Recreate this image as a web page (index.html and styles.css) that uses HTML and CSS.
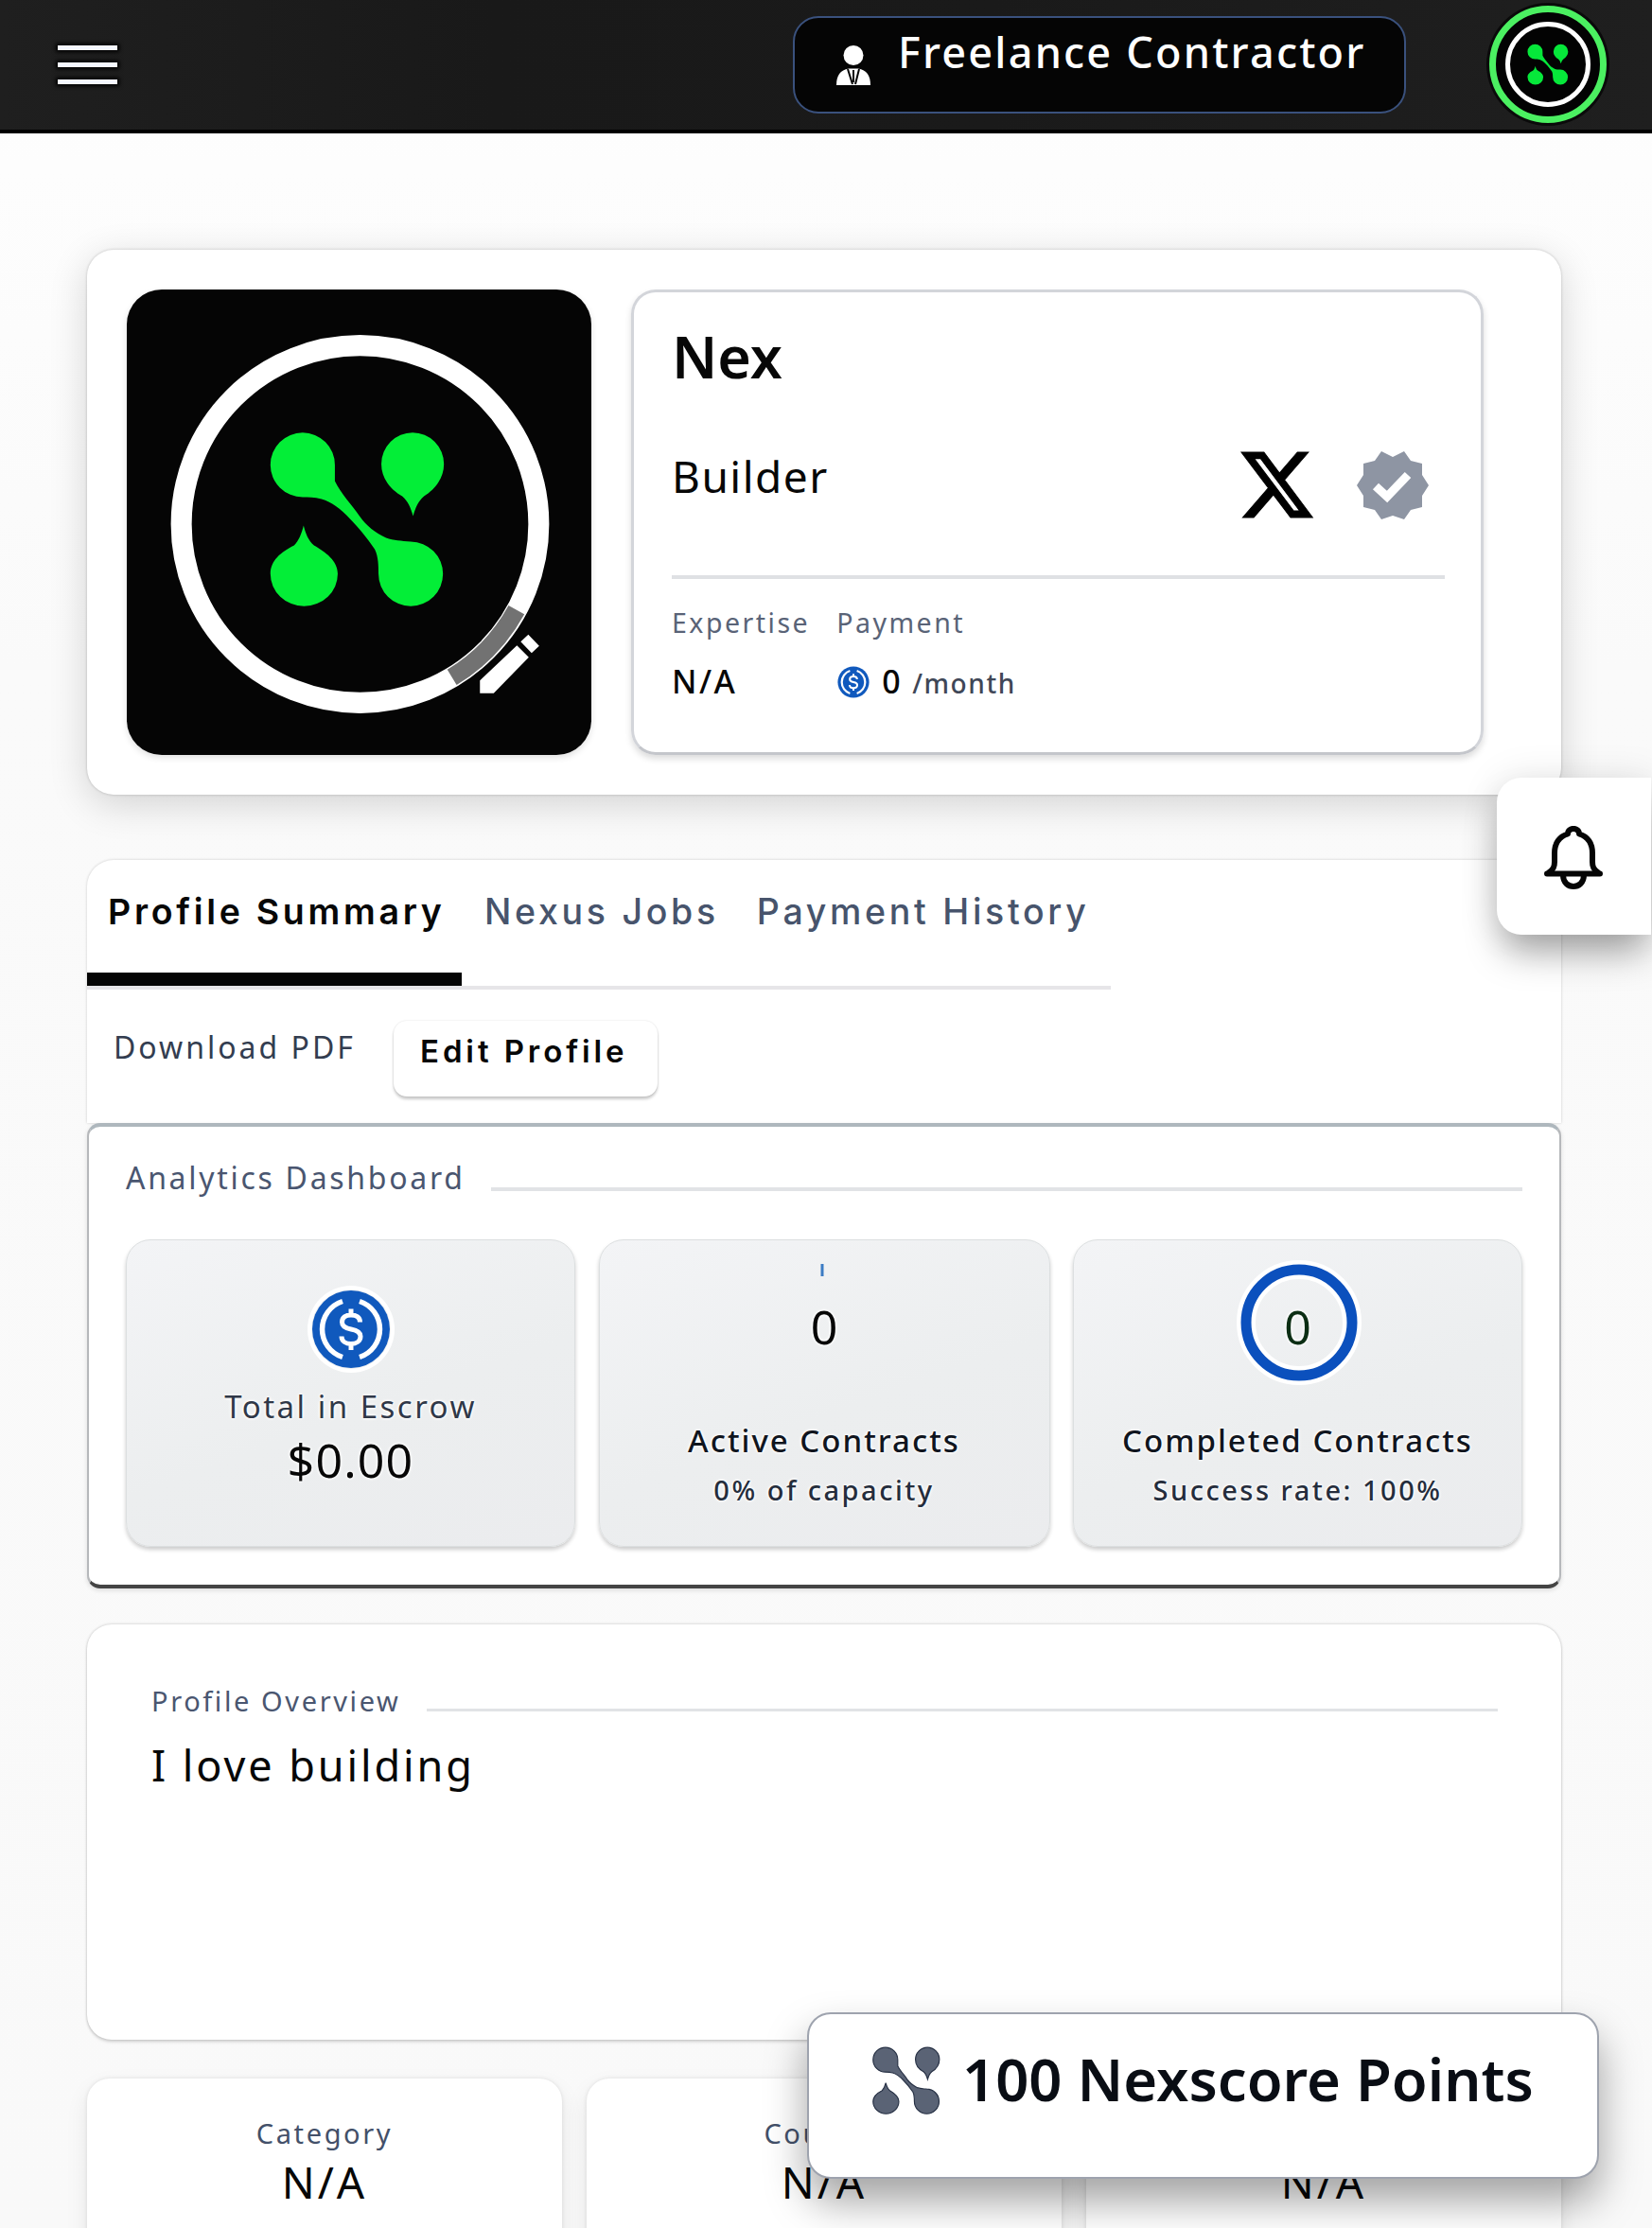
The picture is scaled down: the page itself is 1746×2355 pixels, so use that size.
FILE: index.html
```html
<!DOCTYPE html>
<html lang="en">
<head>
<meta charset="utf-8">
<title>Nex – Profile</title>
<link rel="stylesheet" href="styles.css">
</head>
<body>
<svg width="0" height="0" class="defs" aria-hidden="true">
  <symbol id="nexus" viewBox="-94 -94 188 188">
    <path d="M-92-57a34 34 0 0 1 68 0V-40C-18-27-6-15 2-3 10 8 18 14 30 20 38 23 46 23 56 24A34 34 0 1 1 22 58C22 50 22 40 18 32 10 20 0 8-8 0-18-11-28-18-38-21-46-23-52-23-58-23A34 34 0 0 1-92-57z"/>
    <path d="M58.500-3C56-12 53-19 47-24 36-30 25-42 25-58a33 33 0 0 1 66 0c0 16-11 28-21 34-6 5-9 12-11.500 21z"/>
    <path d="M-57 7C-59 15-62 23-67 28-81 35-92 44-92 58a35.500 34 0 0 0 71 0C-21 44-34 35-46 28-52 23-55 15-57 7z"/>
  </symbol>
  <symbol id="coin" viewBox="0 0 84 84">
    <circle cx="42" cy="42" r="41" fill="#1059bd"/>
    <path d="M33 12.500a31 31 0 0 0 0 59M51 12.500a31 31 0 0 1 0 59" fill="none" stroke="#fff" stroke-width="5.500"/>
    <path d="M51.500 34.500c0-5-4-7.500-9.500-7.500s-9.500 2.500-9.500 7.500 4 6.500 9.500 7.500 10 2.500 10 7.500-4.500 8-10 8-10-3-10-8M42 20.500V27M42 57v7" fill="none" stroke="#fff" stroke-width="5"/>
  </symbol>
</svg>

<header class="topbar">
  <button class="menu" aria-label="Menu"><span></span><span></span><span></span></button>
  <div class="role">
    <svg class="role-icon" viewBox="0 0 38 42"><ellipse cx="19" cy="10.500" rx="10.500" ry="10.500"/><path d="M1 42C1 32 5 26 14 24.500h10C33 26 37 32 37 42z"/><path d="M13 25l5 16M25 25l-4 16M19 26v13" stroke="#050505" stroke-width="2"/></svg>
    <span>Freelance Contractor</span>
  </div>
  <div class="avatar"><div class="avatar-ring"><svg><use href="#nexus"/></svg></div></div>
</header>

<main class="page">
  <section class="hero">
    <div class="photo">
      <svg viewBox="0 0 490 492">
        <circle cx="246" cy="247.500" r="188.500" fill="none" stroke="#fff" stroke-width="22"/>
        <path d="M411 338A188.500 188.500 0 0 1 343 409" fill="none" stroke="#727272" stroke-width="19"/>
        <use href="#nexus" x="149.500" y="148" width="188" height="188"/>
        <path d="M372.500 412.500v13.500H387l37-38-12.500-12.500zM415.500 371.500l8-7.500 11.500 12-8 7.500z" fill="#fff"/>
      </svg>
    </div>
    <div class="info">
      <h1>Nex</h1>
      <div class="title-row">
        <p class="job">Builder</p>
        <div class="marks">
          <svg class="x-logo" viewBox="1.250 2.250 21.500 19.500" preserveAspectRatio="none"><path d="M18.244 2.250h3.308l-7.227 8.260 8.502 11.240H16.170l-5.214-6.817L4.990 21.750H1.680l7.730-8.835L1.254 2.250H8.080l4.713 6.231zm-1.161 17.520h1.833L7.084 4.126H5.117z"/></svg>
          <svg class="verified" viewBox="-38 -37 76 74"><path d="M0-30L12-36 19-26 31-23 31-11 38 0 31 11 31 23 19 26 12 36 0 32-12 36-19 26-31 23-31 11-38 0-31-11-31-23-19-26-12-36z"/><path d="M-18 1L-6 12 16-11" fill="none" stroke="#fff" stroke-width="9"/></svg>
        </div>
      </div>
      <dl class="facts">
        <div><dt>Expertise</dt><dd>N/A</dd></div>
        <div><dt>Payment</dt><dd><svg><use href="#coin"/></svg>0<small>/month</small></dd></div>
      </dl>
    </div>
  </section>

  <section class="panel">
    <nav class="tabs">
      <a class="tab active">Profile Summary</a>
      <a class="tab">Nexus Jobs</a>
      <a class="tab">Payment History</a>
    </nav>
    <div class="actions">
      <a class="download">Download PDF</a>
      <a class="edit">Edit Profile</a>
    </div>
  </section>

  <section class="analytics">
    <h2 class="rule-title">Analytics Dashboard</h2>
    <div class="tiles">
      <div class="tile escrow">
        <svg class="coin"><use href="#coin"/></svg>
        <p class="label">Total in Escrow</p>
        <p class="value">$0.00</p>
      </div>
      <div class="tile">
        <div class="gauge"><svg viewBox="0 0 124 124"><path d="M60 0v13" stroke="#3c7cc4" stroke-width="3"/></svg><b>0</b></div>
        <p class="label strong">Active Contracts</p>
        <p class="sub">0% of capacity</p>
      </div>
      <div class="tile">
        <div class="gauge done"><svg viewBox="0 0 124 124"><circle cx="63" cy="62" r="56" fill="none" stroke="#fff" stroke-width="20"/><circle cx="63" cy="62" r="56" fill="none" stroke="#0b50bd" stroke-width="11"/></svg><b>0</b></div>
        <p class="label strong">Completed Contracts</p>
        <p class="sub">Success rate: 100%</p>
      </div>
    </div>
  </section>

  <section class="overview">
    <h2 class="rule-title">Profile Overview</h2>
    <p>I love building</p>
  </section>

  <section class="cards">
    <div class="card"><h3>Category</h3><p>N/A</p></div>
    <div class="card"><h3>Country</h3><p>N/A</p></div>
    <div class="card"><h3>&nbsp;</h3><p>N/A</p></div>
  </section>
</main>

<button class="bell" aria-label="Notifications">
  <svg viewBox="0 0 62 68" fill="none" stroke="#050505" stroke-width="6" stroke-linejoin="round" stroke-linecap="round"><path d="M3 50.500h56M4 50c6-4 7-7 7-12V29C11 17 17 11 25 8.500 25 1 37 1 37 8.500 45 11 51 17 51 29v9c0 5 1 8 7 12M20 52c0 16 22 16 22 0"/></svg>
</button>
<aside class="score"><svg><use href="#nexus"/></svg><span>100 Nexscore Points</span></aside>
</body>
</html>
```
FILE: styles.css
```css
* { box-sizing: border-box; margin: 0; padding: 0; }
body {
  position: relative;
  width: 1746px;
  height: 2355px;
  overflow: hidden;
  background: linear-gradient(#fefefe, #fafafa 30%, #f9f9f9);
  color: #070707;
  font-family: "Noto Sans", "Open Sans", sans-serif;
}
.defs { position: absolute; }
button { border: 0; background: none; }
svg { display: block; }
h1, h2, h3, b { font-weight: 400; }

.topbar {
  display: flex;
  align-items: center;
  height: 141px;
  padding: 0 48px 5px 61px;
  border-bottom: 4px solid #000;
  background: linear-gradient(90deg, #1f1f1f, #191919 30%, #1a1a1a 60%, #1f1f1f);
}
.menu { display: grid; gap: 13px; width: 63px; margin-top: 4px; }
.menu span { height: 5px; background: #f4f7ff; box-shadow: 0 0 4px 2px #000; }
.role {
  display: flex;
  width: 648px;
  height: 103px;
  margin-left: auto;
  margin-top: 5px;
  border: 2px solid #3a517d;
  border-radius: 27px;
  background: #050505;
  color: #fff;
  font-size: 45px;
  font-weight: 500;
  line-height: 62px;
  letter-spacing: 2.200px;
  white-space: nowrap;
}
.role-icon { width: 38px; height: 42px; margin: 29px 28px 0 43px; fill: #fff; flex: none; }
.role span { margin-top: 5px; }
.avatar {
  width: 124px;
  height: 124px;
  margin: 3px 0 0 88px;
  padding: 10px;
  border: 7px solid #4bf061;
  border-radius: 50%;
  background: #030303;
  box-shadow: 0 0 0 3px #0a0a0a;
}
.avatar-ring { height: 90px; padding: 18px; border: 5px solid #fff; border-radius: 50%; }
.avatar-ring svg { width: 44px; height: 44px; fill: #06e83a; }

.page { padding: 123px 96px 0 92px; }
.hero {
  display: flex;
  gap: 42px;
  height: 576px;
  padding: 42px;
  border-radius: 28px;
  background: #fff;
  box-shadow: 0 0 3px rgba(0, 0, 0, .22), 0 10px 40px rgba(0, 0, 0, .16);
}
.photo { width: 491px; height: 492px; border-radius: 37px; overflow: hidden; background: #050505; fill: #03ee37; box-shadow: 0 3px 7px rgba(0, 0, 0, .12); }
.info {
  width: 901px;
  padding: 0 38px 0 40px;
  border: 3px solid #d3d5da;
  border-bottom-color: #c4c6cb;
  border-radius: 26px;
  box-shadow: 0 4px 7px rgba(0, 0, 0, .14);
}
.info h1 { margin-top: 26px; font-size: 61px; line-height: 84px; font-weight: 600; }
.title-row { display: flex; justify-content: space-between; height: 192px; margin-top: 1px; border-bottom: 4px solid #dfe1e4; }
.job { margin-top: 51px; font-size: 46px; line-height: 64px; letter-spacing: 1.500px; }
.marks { display: flex; gap: 47px; margin: 56px 17px 0 0; }
.x-logo { width: 75px; height: 69px; margin-top: 2px; stroke: #000; stroke-width: .3px; overflow: visible; }
.verified { width: 76px; height: 74px; fill: #8e95a3; }
.facts { display: flex; gap: 28px; margin-top: 26px; }
.facts dt { color: #596377; font-size: 28.500px; line-height: 40px; letter-spacing: 2.500px; }
.facts dd { display: flex; align-items: baseline; margin-top: 19px; font-size: 34px; line-height: 46px; letter-spacing: 2.500px; font-weight: 500; }
.facts dd svg { width: 36px; height: 34px; margin-right: 12px; align-self: center; }
.facts small { margin-left: 10px; color: #3f4757; font-size: 28px; letter-spacing: 1.600px; }

.panel { height: 278px; margin-top: 69px; border-radius: 28px 28px 0 0; background: #fff; box-shadow: 0 0 3px rgba(0, 0, 0, .2); }
.tabs { display: flex; width: 1082px; height: 137px; border-bottom: 4px solid #e6e5e8; font-family: Inter, "Noto Sans", sans-serif; font-size: 37.500px; line-height: 50px; letter-spacing: 3.700px; white-space: nowrap; }
.tab { padding: 30px 20px 0; color: #47546c; font-weight: 500; }
.tab.active { width: 396px; margin-right: 4px; padding-left: 22px; border-bottom: 14px solid #050505; color: #070707; font-weight: 600; }
.actions { display: flex; padding-left: 28px; }
.download { width: 296px; margin-top: 39px; font-size: 32px; line-height: 44px; letter-spacing: 3px; color: #333d50; }
.edit { width: 279px; height: 80px; margin-top: 33px; padding: 12px 0 0 28px; border-radius: 14px; font: 600 33px/40px Inter, "Noto Sans", sans-serif; letter-spacing: 3.900px; box-shadow: 0 3px 3px rgba(0, 0, 0, .2), 0 0 2px rgba(0, 0, 0, .14); }

.analytics { height: 492px; padding: 32px 39px 0; border: 2px solid #b6b8bb; border-top: 4px solid #aeb7bd; border-bottom: 4px solid #444; border-radius: 14px; background: #fff; box-shadow: 0 2px 5px rgba(0, 0, 0, .12); }
.rule-title { display: flex; color: #4a5670; font-size: 32px; line-height: 44px; letter-spacing: 2.700px; white-space: nowrap; }
.rule-title::after { content: ""; flex: 1; height: 4px; margin: 32px 0 0 27px; background: #e1e3e6; }
.tiles { display: grid; grid-template-columns: 475px 477px 475px; justify-content: space-between; margin-top: 43px; }
.tile { display: flex; flex-direction: column; align-items: center; height: 325px; padding-top: 25px; border: 1px solid #dcdfe0; border-radius: 26px; background: linear-gradient(160deg, #f3f4f6, #eceeef 55%, #ebecee); box-shadow: 0 3px 4px rgba(0, 0, 0, .2); text-shadow: 0 0 3px #fff, 0 0 3px #fff, 0 0 4px #fff; white-space: nowrap; }
.coin { width: 84px; height: 84px; border-radius: 50%; box-shadow: 0 0 0 4px #fff; }
.escrow { padding-top: 52px; }
.label { font-size: 33px; line-height: 46px; letter-spacing: 2.500px; color: #303848; }
.escrow .label { margin-top: 17px; }
.value { font-size: 50px; line-height: 68px; letter-spacing: 1.200px; margin-top: -1px; }
.gauge { position: relative; width: 124px; height: 124px; }
.gauge svg { width: 124px; height: 124px; overflow: visible; }
.gauge b { position: absolute; inset: 32px 0 auto; text-align: center; font-size: 50px; line-height: 68px; }
.gauge.done b { color: #0c2e14; }
.strong { margin-top: 40px; color: #10151e; letter-spacing: 2.300px; font-weight: 500; letter-spacing: 2px; }
.sub { margin-top: 9px; color: #252d3c; font-size: 29px; line-height: 40px; letter-spacing: 2.500px; font-weight: 500; }

.overview { height: 439px; margin-top: 38px; padding: 59px 67px 0 68px; border-radius: 26px; background: #fff; box-shadow: 0 0 3px rgba(0, 0, 0, .24), 0 3px 3px rgba(0, 0, 0, .1); }
.overview .rule-title { font-size: 29px; letter-spacing: 2.600px; }
.overview .rule-title::after { height: 3px; margin: 30px 0 0 28px; }
.overview p { margin-top: 15px; font-size: 45px; line-height: 62px; letter-spacing: 2.900px; }
.cards { display: grid; grid-template-columns: repeat(3, 502px); justify-content: space-between; margin-top: 41px; }
.card { height: 230px; padding-top: 38px; border-radius: 24px; background: #fff; text-align: center; box-shadow: 0 0 4px rgba(0, 0, 0, .1), 0 10px 24px rgba(0, 0, 0, .08); }
.card h3 { color: #435069; font-size: 29px; line-height: 40px; letter-spacing: 2.600px; }
.card p { font-size: 46px; line-height: 62px; letter-spacing: 3px; }

.bell { position: absolute; top: 822px; right: 1px; width: 163px; height: 166px; border-radius: 26px 0 0 26px; background: #fff; box-shadow: 0 24px 38px -6px rgba(0, 0, 0, .34), 0 0 40px rgba(0, 0, 0, .1); }
.bell svg { width: 62px; height: 68px; margin: 4px 0 0 50px; }
.score { position: absolute; top: 2127px; left: 853px; display: flex; width: 837px; height: 176px; padding: 34px 0 0 67px; border: 2px solid #9ea3ae; border-radius: 25px; background: #fff; box-shadow: 0 24px 44px rgba(0, 0, 0, .36); color: #090d14; white-space: nowrap; }
.score svg { width: 72px; height: 72px; fill: #5a6375; stroke: #263044; stroke-width: 3; }
.score span { margin: -6px 0 0 23px; font-size: 61.500px; line-height: 80px; font-weight: 600; }
```
